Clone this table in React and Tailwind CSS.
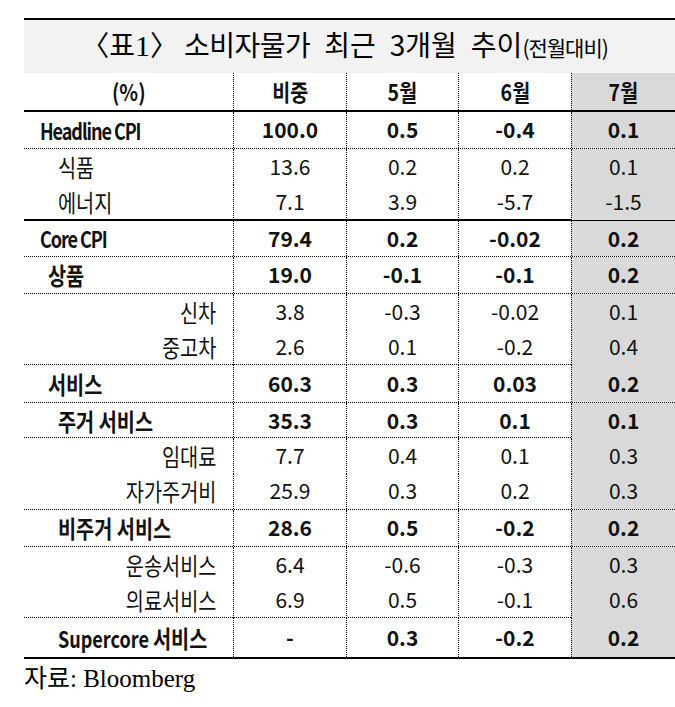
import React from "react";

const GRID = "grid grid-cols-[209px_113px_112px_113px_104px]";

const rows = [
  { label: "Headline CPI", v: ["100.0", "0.5", "-0.4", "0.1"], kind: "l1", lat: true, h: "h-[37px]", b: "dot" },
  { label: "식품", v: ["13.6", "0.2", "0.2", "0.1"], kind: "s2", h: "h-[35px]", b: "none" },
  { label: "에너지", v: ["7.1", "3.9", "-5.7", "-1.5"], kind: "s2", h: "h-[37px]", b: "solid" },
  { label: "Core CPI", v: ["79.4", "0.2", "-0.02", "0.2"], kind: "l1", lat: true, h: "h-[36px]", b: "dot" },
  { label: "상품", v: ["19.0", "-0.1", "-0.1", "0.2"], kind: "l2", h: "h-[37px]", b: "dot" },
  { label: "신차", v: ["3.8", "-0.3", "-0.02", "0.1"], kind: "r", h: "h-[35px]", b: "none" },
  { label: "중고차", v: ["2.6", "0.1", "-0.2", "0.4"], kind: "r", h: "h-[36px]", b: "dot" },
  { label: "서비스", v: ["60.3", "0.3", "0.03", "0.2"], kind: "l2", h: "h-[38px]", b: "dot" },
  { label: "주거 서비스", v: ["35.3", "0.3", "0.1", "0.1"], kind: "l3", h: "h-[35px]", b: "dot" },
  { label: "임대료", v: ["7.7", "0.4", "0.1", "0.3"], kind: "r", h: "h-[35px]", b: "none" },
  { label: "자가주거비", v: ["25.9", "0.3", "0.2", "0.3"], kind: "r", h: "h-[37px]", b: "dot" },
  { label: "비주거 서비스", v: ["28.6", "0.5", "-0.2", "0.2"], kind: "l3", h: "h-[37px]", b: "dot" },
  { label: "운송서비스", v: ["6.4", "-0.6", "-0.3", "0.3"], kind: "r", h: "h-[35px]", b: "none" },
  { label: "의료서비스", v: ["6.9", "0.5", "-0.1", "0.6"], kind: "r", h: "h-[36px]", b: "dot" },
  { label: "Supercore 서비스", v: ["-", "0.3", "-0.2", "0.2"], kind: "l3", super: true, h: "h-[41px]", b: "solid" },
];

function labelText(r) {
  if (r.lat) {
    return <span className="text-[22px] tracking-[-1.3px]">{r.label}</span>;
  }
  if (r.super) {
    return (
      <>
        <span className="text-[22px]">Supercore </span>
        <span className="text-[24px]">서비스</span>
      </>
    );
  }
  return <span className="text-[24px]">{r.label}</span>;
}

function labelCell(r) {
  if (r.kind === "r") {
    return (
      <div className="flex items-center justify-end pr-[17px]">
        <span className="inline-block origin-right scale-x-[0.82] whitespace-nowrap font-normal">{labelText(r)}</span>
      </div>
    );
  }
  const pad = r.kind === "l1" ? "pl-[16px]" : r.kind === "l2" ? "pl-[24px]" : "pl-[34px]";
  const weight = r.kind === "s2" ? "font-normal" : "font-bold";
  return (
    <div className={"flex items-center " + pad}>
      <span className={"inline-block origin-left scale-x-[0.82] whitespace-nowrap " + weight}>{labelText(r)}</span>
    </div>
  );
}

function Row({ r }) {
  const bold = r.kind === "l1" || r.kind === "l2" || r.kind === "l3";
  const border =
    r.b === "dot"
      ? "border-b border-dotted border-black"
      : r.b === "solid"
      ? "border-b-2 border-solid border-black"
      : "";
  const numCls = bold ? "text-[21px] font-bold" : "text-[21px] font-normal";
  return (
    <div className={GRID + " " + r.h + " " + border}>
      {labelCell(r)}
      {r.v.map((x, i) => (
        <div
          key={i}
          className={
            i === 3
              ? "flex items-center justify-center border-l border-dotted border-black bg-[#d9d9d9]"
              : "flex items-center justify-center border-l border-dotted border-black"
          }
        >
          <span className={numCls}>{x}</span>
        </div>
      ))}
    </div>
  );
}

function Head({ children, gray, first }) {
  const cls = first
    ? "flex items-center justify-center"
    : gray
    ? "flex items-center justify-center border-l border-dotted border-black bg-[#d9d9d9]"
    : "flex items-center justify-center border-l border-dotted border-black";
  return (
    <div className={cls}>
      <span className="inline-block scale-x-[0.85] text-[23px] font-bold">{children}</span>
    </div>
  );
}

export default function App() {
  return (
    <div className="w-[675px] h-[707px] bg-white overflow-hidden pl-[24px] pt-[18px] text-[#111]" style={{ fontFamily: '"Noto Sans CJK KR", "Noto Sans", sans-serif' }}>
      <div className="w-[651px] border-t-2 border-black">
        <div className="h-[53px] bg-[#f2f2f2] flex items-center justify-center pb-[2px]">
          <div className="flex items-baseline whitespace-nowrap text-[28px] font-normal text-black">
            <span className="-ml-[10px]">〈</span>
            <span>표</span>
            <span style={{ fontFamily: '"Liberation Serif", serif' }} className="text-[30px]">1</span>
            <span className="mr-[-10px]">〉</span>
            <span className="ml-[16px] tracking-[-0.5px]">소비자물가</span>
            <span className="ml-[14px]">최근</span>
            <span className="ml-[14px]">3개월</span>
            <span className="ml-[14px]">추이</span>
            <span className="text-[21px] tracking-[-1px]">(전월대비)</span>
          </div>
        </div>
        <div className={GRID + " h-[39px] border-b-2 border-black"}>
          <Head first>(%)</Head>
          <Head>비중</Head>
          <Head>5월</Head>
          <Head>6월</Head>
          <Head gray>7월</Head>
        </div>
        {rows.map((r, i) => (
          <Row key={i} r={r} />
        ))}
      </div>
      <div className="mt-[4px] text-[25px] text-black leading-[32px]" style={{ fontFamily: '"Liberation Serif", "Noto Sans CJK KR", serif' }}>
        자료: Bloomberg
      </div>
    </div>
  );
}
